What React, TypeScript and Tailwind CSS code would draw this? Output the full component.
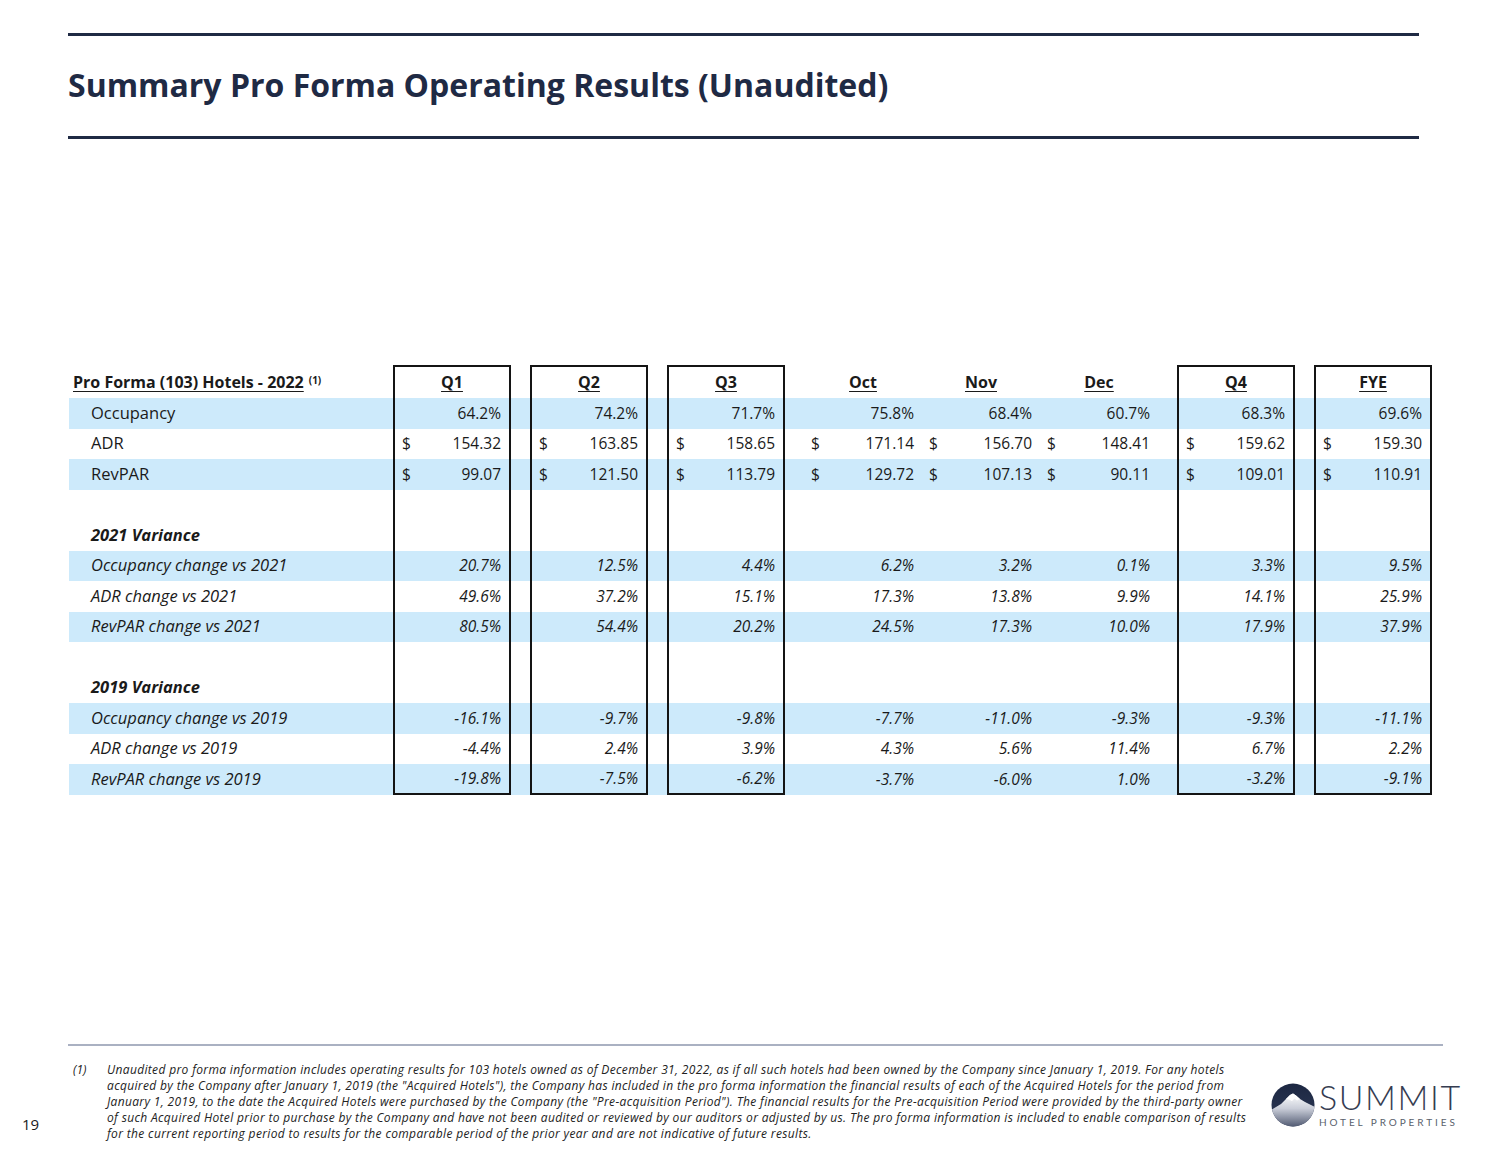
import React from "react";

type Kind = "pct" | "money";

const BOXED = [true, true, true, false, false, false, true, true];
const GAP_BEFORE = [false, true, true, true, false, false, true, true];
const HEADERS = ["Q1", "Q2", "Q3", "Oct", "Nov", "Dec", "Q4", "FYE"];

const GRID =
  "grid grid-cols-[324px_118px_19px_118px_19px_118px_19px_118px_118px_118px_19px_118px_19px_118px]";

type RowDef =
  | { type: "data"; label: string; kind: Kind; italic?: boolean; values: string[]; blue: boolean }
  | { type: "blank" }
  | { type: "heading"; label: string };

const ROWS: RowDef[] = [
  { type: "data", label: "Occupancy", kind: "pct", blue: true, values: ["64.2%", "74.2%", "71.7%", "75.8%", "68.4%", "60.7%", "68.3%", "69.6%"] },
  { type: "data", label: "ADR", kind: "money", blue: false, values: ["154.32", "163.85", "158.65", "171.14", "156.70", "148.41", "159.62", "159.30"] },
  { type: "data", label: "RevPAR", kind: "money", blue: true, values: ["99.07", "121.50", "113.79", "129.72", "107.13", "90.11", "109.01", "110.91"] },
  { type: "blank" },
  { type: "heading", label: "2021 Variance" },
  { type: "data", label: "Occupancy change vs 2021", kind: "pct", italic: true, blue: true, values: ["20.7%", "12.5%", "4.4%", "6.2%", "3.2%", "0.1%", "3.3%", "9.5%"] },
  { type: "data", label: "ADR change vs 2021", kind: "pct", italic: true, blue: false, values: ["49.6%", "37.2%", "15.1%", "17.3%", "13.8%", "9.9%", "14.1%", "25.9%"] },
  { type: "data", label: "RevPAR change vs 2021", kind: "pct", italic: true, blue: true, values: ["80.5%", "54.4%", "20.2%", "24.5%", "17.3%", "10.0%", "17.9%", "37.9%"] },
  { type: "blank" },
  { type: "heading", label: "2019 Variance" },
  { type: "data", label: "Occupancy change vs 2019", kind: "pct", italic: true, blue: true, values: ["-16.1%", "-9.7%", "-9.8%", "-7.7%", "-11.0%", "-9.3%", "-9.3%", "-11.1%"] },
  { type: "data", label: "ADR change vs 2019", kind: "pct", italic: true, blue: false, values: ["-4.4%", "2.4%", "3.9%", "4.3%", "5.6%", "11.4%", "6.7%", "2.2%"] },
  { type: "data", label: "RevPAR change vs 2019", kind: "pct", italic: true, blue: true, values: ["-19.8%", "-7.5%", "-6.2%", "-3.7%", "-6.0%", "1.0%", "-3.2%", "-9.1%"] },
];

function boxClass(i: number, top: boolean, bottom: boolean) {
  if (!BOXED[i]) return "";
  return [
    "border-x-2 border-[#141414]",
    top ? "border-t-2" : "",
    bottom ? "border-b-2" : "",
  ].join(" ");
}

function Cells({
  render,
  top = false,
  bottom = false,
}: {
  render: (i: number) => React.ReactNode;
  top?: boolean;
  bottom?: boolean;
}) {
  const out: React.ReactNode[] = [];
  HEADERS.forEach((_, i) => {
    if (GAP_BEFORE[i]) out.push(<div key={"g" + i} />);
    out.push(
      <div key={"c" + i} className={"h-full " + boxClass(i, top, bottom)}>
        {render(i)}
      </div>
    );
  });
  return <>{out}</>;
}

function SummitLogo() {
  return (
    <div className="flex items-start">
      <svg width="44" height="44" viewBox="0 0 44 44" className="mt-[37px]">
        <defs>
          <linearGradient id="sky" x1="0" y1="0" x2="0" y2="1">
            <stop offset="0" stopColor="#1c2742" />
            <stop offset="1" stopColor="#2f3b58" />
          </linearGradient>
          <linearGradient id="snow" x1="0" y1="0" x2="0" y2="1">
            <stop offset="0" stopColor="#ffffff" />
            <stop offset="0.45" stopColor="#c9cdd8" />
            <stop offset="1" stopColor="#4f5870" />
          </linearGradient>
          <clipPath id="disc">
            <circle cx="22" cy="22" r="21.5" />
          </clipPath>
        </defs>
        <g clipPath="url(#disc)">
          <rect width="44" height="44" fill="url(#sky)" />
          <path
            d="M0 27 L10 21 L15 16 L19 12 L22 10.5 L25 12.5 L29 16 L34 19 L44 24 L44 44 L0 44 Z"
            fill="url(#snow)"
          />
          <path
            d="M15 16 L19 12 L22 10.5 L25 12.5 L29 16 L26 17.5 L23.5 15.5 L21 18 L18 16.5 Z"
            fill="#ffffff"
          />
        </g>
      </svg>
      <div className="ml-[4px] flex flex-col">
        <div className="mt-[35px] h-[32px] font-['Lato'] text-[34px] font-light leading-[32px] tracking-[1.6px] text-[#353c51]">
          SUMMIT
        </div>
        <div className="mt-[4px] font-['Lato'] text-[10px] leading-[10px] tracking-[2.9px] text-[#5a5f6c]">
          HOTEL PROPERTIES
        </div>
      </div>
    </div>
  );
}

export default function App() {
  return (
    <div className="flex h-[1159px] w-[1500px] flex-col bg-white font-['Open_Sans',sans-serif] text-[#1a1a1a]">
      <div className="ml-[68px] mt-[33px] h-[3px] w-[1351px] bg-[#1f2a44]" />
      <h1 className="ml-[68px] mt-[33px] h-[32px] text-[32px] font-bold leading-[32px] text-[#1f2a44]">
        Summary Pro Forma Operating Results (Unaudited)
      </h1>
      <div className="ml-[68px] mt-[35px] h-[3px] w-[1351px] bg-[#1f2a44]" />

      <div className="ml-[69px] mt-[226px] w-[1363px] text-[15.5px]">
        <div className={GRID + " h-[33px]"}>
          <div className="flex items-end pb-[4px] pl-[4px] text-[16px] font-bold">
            <span className="underline underline-offset-[3px]">Pro Forma (103) Hotels - 2022</span>
            <span className="mb-[9px] ml-[5px] text-[10px] font-bold leading-[10px]">(1)</span>
          </div>
          <Cells
            top
            render={(i) => (
              <div className="flex h-full items-end justify-center pb-[4px] text-[16px] font-bold">
                <span className="underline underline-offset-[3px]">{HEADERS[i]}</span>
              </div>
            )}
          />
        </div>

        {ROWS.map((row, r) => {
          const last = r === ROWS.length - 1;
          if (row.type === "blank") {
            return (
              <div key={r} className={GRID + " h-[30.5px]"}>
                <div />
                <Cells render={() => null} />
              </div>
            );
          }
          if (row.type === "heading") {
            return (
              <div key={r} className={GRID + " h-[30.5px]"}>
                <div className="flex items-center pl-[22px] text-[16.5px] font-bold italic">
                  {row.label}
                </div>
                <Cells render={() => null} />
              </div>
            );
          }
          return (
            <div
              key={r}
              className={GRID + " h-[30.5px] " + (row.blue ? "bg-[#cdeafb]" : "")}
            >
              <div
                className={
                  "flex items-center pl-[22px] text-[16.5px] " + (row.italic ? "italic" : "")
                }
              >
                {row.label}
              </div>
              <Cells
                bottom={last}
                render={(i) =>
                  row.kind === "money" ? (
                    <div className="flex h-full items-center justify-between pl-[7px] pr-[8px]">
                      <span>$</span>
                      <span>{row.values[i]}</span>
                    </div>
                  ) : (
                    <div
                      className={
                        "flex h-full items-center justify-end pr-[8px] " +
                        (row.italic ? "italic" : "")
                      }
                    >
                      {row.values[i]}
                    </div>
                  )
                }
              />
            </div>
          );
        })}
      </div>

      <div className="ml-[68px] mt-[249px] h-[2px] w-[1375px] bg-[#aab1c2]" />
      <div className="flex">
        <div className="w-[73px] pl-[22px] pt-[68px] text-[15px] leading-[20px]">19</div>
        <div className="w-[34px] pt-[16px] text-[12px] italic leading-[16px] text-[#222]">(1)</div>
        <div className="w-[1164px] whitespace-nowrap pt-[16px] text-[12px] italic leading-[16px] tracking-[0.35px] text-[#222]">
          Unaudited pro forma information includes operating results for 103 hotels owned as of December 31, 2022, as if all such hotels had been owned by the Company since January 1, 2019. For any hotels
          <br />
          acquired by the Company after January 1, 2019 (the "Acquired Hotels"), the Company has included in the pro forma information the financial results of each of the Acquired Hotels for the period from
          <br />
          January 1, 2019, to the date the Acquired Hotels were purchased by the Company (the "Pre-acquisition Period"). The financial results for the Pre-acquisition Period were provided by the third-party owner
          <br />
          of such Acquired Hotel prior to purchase by the Company and have not been audited or reviewed by our auditors or adjusted by us. The pro forma information is included to enable comparison of results
          <br />
          for the current reporting period to results for the comparable period of the prior year and are not indicative of future results.
        </div>
        <SummitLogo />
      </div>
    </div>
  );
}
